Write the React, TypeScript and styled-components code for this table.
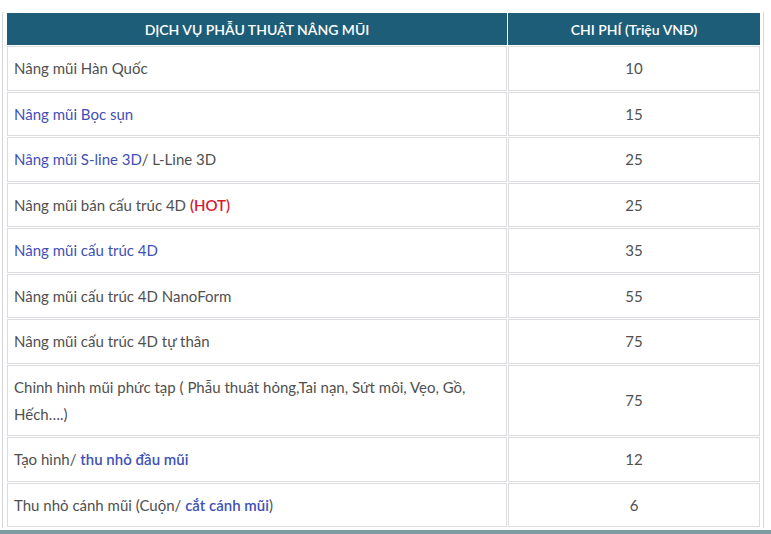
import React from 'react'
import styled, { createGlobalStyle } from 'styled-components'

const GlobalStyle = createGlobalStyle`
  html, body {
    margin: 0;
    padding: 0;
    background: #ffffff;
  }
`

const Page = styled.div`
  width: 771px;
  height: 534px;
  box-sizing: border-box;
  padding: 12px 0 0 2px;
  overflow: hidden;
  background: #fff;
  border-bottom: 4px solid #7f9ca3;
`

const Frame = styled.div`
  width: 762px;
  box-sizing: border-box;
  border-left: 1px solid #d6d6da;
  border-right: 1px solid #d6d6da;
  padding: 0 2px 0 3px;
`

const Table = styled.table`
  width: 755px;
  border-collapse: separate;
  border-spacing: 1px;
  font-family: Lato, "Open Sans", sans-serif;
  font-size: 15px;
  color: #505050;
`

const HeadCell = styled.th`
  background: #1e5d78;
  color: #ffffff;
  font-weight: 600;
  font-size: 14px;
  height: 30px;
  padding: 0 8px;
  text-align: center;
  border: 1px solid #1e5d78;
`

const Cell = styled.td<{ $center?: boolean }>`
  border: 1px solid #dcdce0;
  padding: 8px 6px 7.5px 6px;
  line-height: 27px;
  text-align: ${p => (p.$center ? 'center' : 'left')};
  vertical-align: middle;
`

const Link = styled.span<{ $bold?: boolean }>`
  color: #3f51b5;
  font-weight: ${p => (p.$bold ? 600 : 400)};
`

const Hot = styled.span`
  color: #d3202f;
  font-weight: 600;
`

const rows: { name: React.ReactNode; price: string }[] = [
  { name: 'Nâng mũi Hàn Quốc', price: '10' },
  { name: <Link>Nâng mũi Bọc sụn</Link>, price: '15' },
  { name: <><Link>Nâng mũi S-line 3D</Link>/ L-Line 3D</>, price: '25' },
  { name: <>Nâng mũi bán cấu trúc 4D <Hot>(HOT)</Hot></>, price: '25' },
  { name: <Link>Nâng mũi cấu trúc 4D</Link>, price: '35' },
  { name: 'Nâng mũi cấu trúc 4D NanoForm', price: '55' },
  { name: 'Nâng mũi cấu trúc 4D tự thân', price: '75' },
  { name: <>Chỉnh hình mũi phức tạp ( Phẫu thuât hỏng,Tai nạn, Sứt môi, Vẹo, Gồ,<br />Hếch….)</>, price: '75' },
  { name: <>Tạo hình/ <Link $bold>thu nhỏ đầu mũi</Link></>, price: '12' },
  { name: <>Thu nhỏ cánh mũi (Cuộn/ <Link $bold>cắt cánh mũi</Link>)</>, price: '6' },
]

export default function App() {
  return (
    <Page>
      <GlobalStyle />
      <Frame>
        <Table>
          <colgroup>
            <col style={{ width: 500 }} />
            <col />
          </colgroup>
          <thead>
            <tr>
              <HeadCell>DỊCH VỤ PHẪU THUẬT NÂNG MŨI</HeadCell>
              <HeadCell>CHI PHÍ (Triệu VNĐ)</HeadCell>
            </tr>
          </thead>
          <tbody>
            {rows.map((r, i) => (
              <tr key={i}>
                <Cell>{r.name}</Cell>
                <Cell $center>{r.price}</Cell>
              </tr>
            ))}
          </tbody>
        </Table>
      </Frame>
    </Page>
  )
}
